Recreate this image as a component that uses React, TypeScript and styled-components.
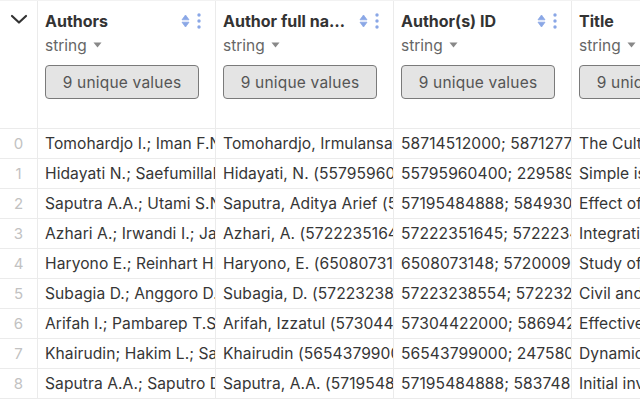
import React from "react";
import styled, { createGlobalStyle } from "styled-components";

const Global = createGlobalStyle`
  html, body { margin: 0; padding: 0; background: #fff; overflow: hidden; }
  body { font-family: Inter, "Noto Sans", sans-serif; color: #333; }
`;

const Table = styled.div`
  width: 640px;
  height: 400px;
  overflow: hidden;
  display: flex;
  flex-direction: column;
`;

const Row = styled.div<{ $header?: boolean }>`
  display: grid;
  grid-template-columns: 38px 178px 178px 178px 178px;
  height: ${(p) => (p.$header ? "129px" : "30px")};
  border-bottom: 1px solid #ebebeb;
  flex: none;
  box-sizing: border-box;
  border-top: ${(p) => (p.$header ? "1px solid #f2f2f2" : "none")};
`;

const IndexCell = styled.div<{ $header?: boolean }>`
  border-right: 1px solid #ebebeb;
  display: flex;
  justify-content: center;
  align-items: ${(p) => (p.$header ? "flex-start" : "center")};
  padding-top: ${(p) => (p.$header ? "12px" : "0")};
  color: #c2c2c2;
  font-size: 15px;
  box-sizing: border-box;
`;

const Cell = styled.div`
  border-right: 1px solid #ebebeb;
  padding: 0 0 0 7px;
  white-space: nowrap;
  overflow: hidden;
  font-size: 15.6px;
  letter-spacing: 0.07px;
  line-height: 30px;
  color: #363636;
  box-sizing: border-box;
`;

const HeadCell = styled.div`
  border-right: 1px solid #ebebeb;
  padding: 9px 0 0 7px;
  box-sizing: border-box;
  overflow: hidden;
  display: flex;
  flex-direction: column;
`;

const TitleRow = styled.div`
  display: flex;
  align-items: center;
  height: 22px;
  padding-right: 14px;
  gap: 8px;
`;

const Title = styled.div`
  flex: 1;
  min-width: 0;
  font-weight: 700;
  font-size: 16px;
  color: #333;
  white-space: nowrap;
  overflow: hidden;
  text-overflow: ellipsis;
`;

const Icons = styled.div`
  display: flex;
  align-items: center;
  gap: 7px;
  flex: none;
`;

const TypeRow = styled.div`
  margin-top: 3px;
  height: 20px;
  display: flex;
  align-items: center;
  gap: 6px;
  font-size: 15.5px;
  color: #666;
  white-space: nowrap;
`;

const UniqueButton = styled.div`
  margin-top: 10px;
  width: 154px;
  height: 34px;
  box-sizing: border-box;
  border: 1px solid #7a7a7a;
  border-radius: 4px;
  background: #e4e4e4;
  color: #555;
  font-size: 15.5px;
  letter-spacing: 0.2px;
  display: flex;
  align-items: center;
  justify-content: center;
  white-space: nowrap;
  flex: none;
`;

const SortIcon = () => (
  <svg width="9" height="14" viewBox="0 0 9 14">
    <path d="M4.5 1 L8 5.8 L1 5.8 Z" fill="#8aa7e6" stroke="#8aa7e6" strokeWidth="0.8" strokeLinejoin="round" />
    <path d="M4.5 13 L8 8.2 L1 8.2 Z" fill="#8aa7e6" stroke="#8aa7e6" strokeWidth="0.8" strokeLinejoin="round" />
  </svg>
);

const DotsIcon = () => (
  <svg width="4" height="16" viewBox="0 0 4 16">
    <circle cx="2" cy="2" r="1.7" fill="#8aa7e6" />
    <circle cx="2" cy="8" r="1.7" fill="#8aa7e6" />
    <circle cx="2" cy="14" r="1.7" fill="#8aa7e6" />
  </svg>
);

const Caret = () => (
  <svg width="9" height="6" viewBox="0 0 9 6">
    <path d="M0.5 0.5 L8.5 0.5 L4.5 5.5 Z" fill="#888" />
  </svg>
);

const Chevron = () => (
  <svg width="18" height="12" viewBox="0 0 18 12">
    <path d="M2 3 L9 9.5 L16 3" stroke="#333" strokeWidth="2.2" fill="none" strokeLinecap="round" strokeLinejoin="round" />
  </svg>
);

const columns = ["Authors", "Author full names", "Author(s) ID", "Title"];

const rows: string[][] = [
  ["Tomohardjo I.; Iman F.N.; Hariyadi", "Tomohardjo, Irmulansati (58714512000)", "58714512000; 58712779500", "The Cultivation of"],
  ["Hidayati N.; Saefumillah A.", "Hidayati, N. (55795960400)", "55795960400; 22958900000", "Simple is better"],
  ["Saputra A.A.; Utami S.N.H.", "Saputra, Aditya Arief (57195484888)", "57195484888; 58493073000", "Effect of the"],
  ["Azhari A.; Irwandi I.; Jamil M.", "Azhari, A. (57222351645)", "57222351645; 57222347000", "Integration of"],
  ["Haryono E.; Reinhart H.; Lee", "Haryono, E. (6508073148)", "6508073148; 57200093000", "Study of the"],
  ["Subagia D.; Anggoro D.W.", "Subagia, D. (57223238554)", "57223238554; 57223290000", "Civil and"],
  ["Arifah I.; Pambarep T.S.", "Arifah, Izzatul (57304422000)", "57304422000; 58694200000", "Effective"],
  ["Khairudin; Hakim L.; Sari", "Khairudin (56543799000)", "56543799000; 24758000000", "Dynamic"],
  ["Saputra A.A.; Saputro D.R.", "Saputra, A.A. (57195484888)", "57195484888; 58374830000", "Initial inv"],
];

export default function App() {
  return (
    <>
      <Global />
      <Table>
        <Row $header>
          <IndexCell $header>
            <Chevron />
          </IndexCell>
          {columns.map((c) => (
            <HeadCell key={c}>
              <TitleRow>
                <Title>{c}</Title>
                <Icons>
                  <SortIcon />
                  <DotsIcon />
                </Icons>
              </TitleRow>
              <TypeRow>
                string <Caret />
              </TypeRow>
              <UniqueButton>9 unique values</UniqueButton>
            </HeadCell>
          ))}
        </Row>
        {rows.map((r, i) => (
          <Row key={i}>
            <IndexCell>{i}</IndexCell>
            {r.map((v, j) => (
              <Cell key={j}>{v}</Cell>
            ))}
          </Row>
        ))}
      </Table>
    </>
  );
}
